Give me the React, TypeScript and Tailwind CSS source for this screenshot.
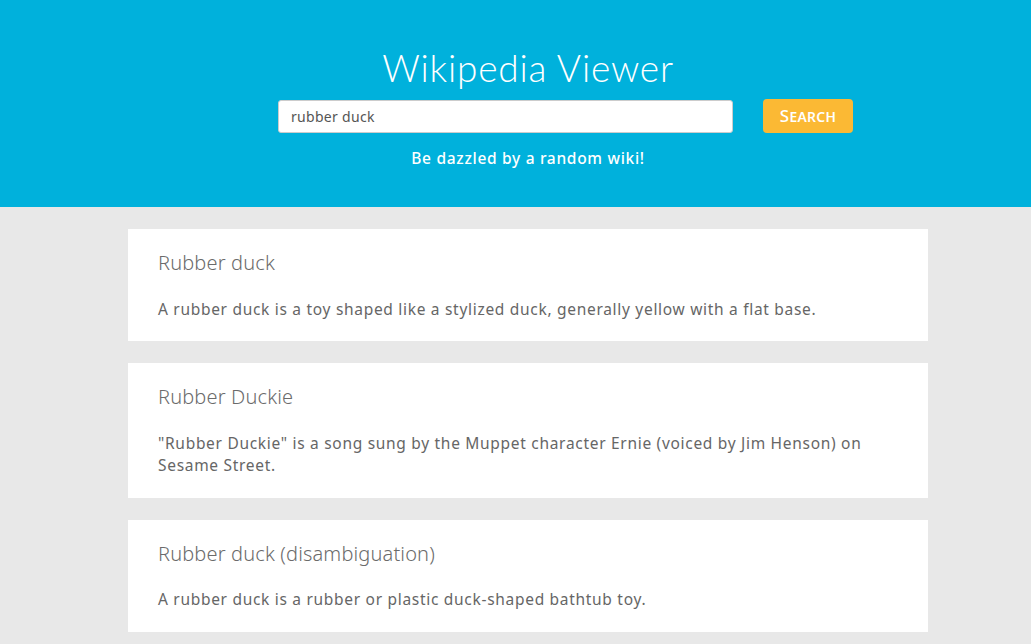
import React, { useState } from 'react'

interface Article {
  title: string
  snippet: string
}

const articles: Article[] = [
  {
    title: 'Rubber duck',
    snippet: 'A rubber duck is a toy shaped like a stylized duck, generally yellow with a flat base.',
  },
  {
    title: 'Rubber Duckie',
    snippet: '"Rubber Duckie" is a song sung by the Muppet character Ernie (voiced by Jim Henson) on Sesame Street.',
  },
  {
    title: 'Rubber duck (disambiguation)',
    snippet: 'A rubber duck is a rubber or plastic duck-shaped bathtub toy.',
  },
]

export default function App() {
  const [query, setQuery] = useState('rubber duck')

  return (
    <div className="min-h-[644px] bg-[#e8e8e8] font-['Noto_Sans',sans-serif]">
      {/* Header */}
      <div className="bg-[#00b1dc] h-[207px] pt-[44px]">
        <div className="w-[800px] ml-[128px] flex flex-col">
          <h1 className="text-center text-white text-[37px] leading-[48px] font-light font-['Lato',sans-serif] tracking-[0.8px]">
            Wikipedia Viewer
          </h1>
          <div className="flex items-center pl-[150px] mt-[7px] gap-[30px]">
            <input
              value={query}
              onChange={(e) => setQuery(e.target.value)}
              className="w-[455px] h-[33px] bg-white rounded-[3px] border border-[#cccccc] px-3 text-[14px] text-[#555] tracking-[0.3px] outline-none"
            />
            <button className="w-[90px] h-[34px] bg-[#fbb934] rounded-[4px] text-white text-[17px] font-medium [font-variant:small-caps] tracking-[0.3px]">
              Search
            </button>
          </div>
          <p className="text-center text-white text-[15.5px] font-medium mt-[14px] tracking-[0.7px]">
            Be dazzled by a random wiki!
          </p>
        </div>
      </div>

      {/* Results */}
      <div className="w-[800px] ml-[128px] pt-[22px] pb-[22px] flex flex-col gap-[22px]">
        {articles.map((article) => (
          <div key={article.title} className="bg-white px-[30px] pt-[20px] pb-[21px] text-[#666]">
            <h2 className="text-[20px] leading-[28px] font-light text-[#6b6b6b] tracking-[0.15px]">{article.title}</h2>
            <p className="mt-[20.5px] text-[15.5px] leading-[22.5px] tracking-[0.7px]">{article.snippet}</p>
          </div>
        ))}
      </div>
    </div>
  )
}
